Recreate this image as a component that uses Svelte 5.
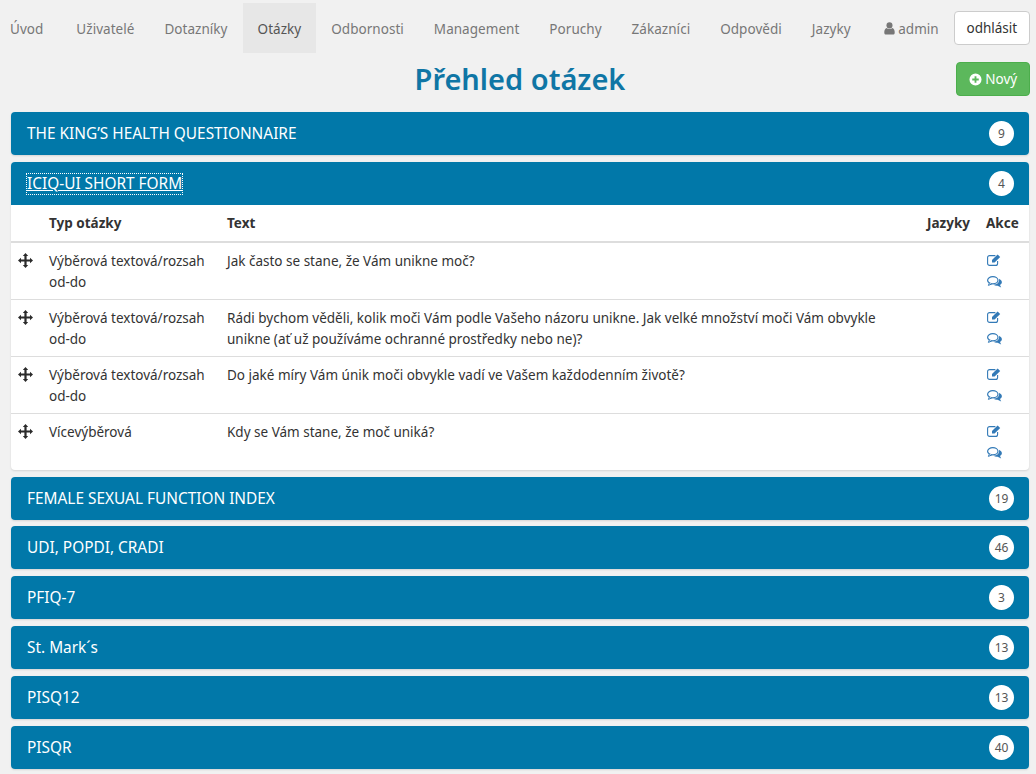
<script lang="ts">
  const navItems = ['Úvod', 'Uživatelé', 'Dotazníky', 'Otázky', 'Odbornosti', 'Management', 'Poruchy', 'Zákazníci', 'Odpovědi', 'Jazyky'];

  const groups = [
    { title: 'THE KING’S HEALTH QUESTIONNAIRE', count: 9 },
    { title: 'ICIQ-UI SHORT FORM', count: 4, open: true },
    { title: 'FEMALE SEXUAL FUNCTION INDEX', count: 19 },
    { title: 'UDI, POPDI, CRADI', count: 46 },
    { title: 'PFIQ-7', count: 3 },
    { title: 'St. Mark´s', count: 13 },
    { title: 'PISQ12', count: 13 },
    { title: 'PISQR', count: 40 }
  ];

  const questions = [
    { type: 'Výběrová textová/rozsah od-do', text: 'Jak často se stane, že Vám unikne moč?' },
    { type: 'Výběrová textová/rozsah od-do', text: 'Rádi bychom věděli, kolik moči Vám podle Vašeho názoru unikne. Jak velké množství moči Vám obvykle unikne (ať už používáme ochranné prostředky nebo ne)?' },
    { type: 'Výběrová textová/rozsah od-do', text: 'Do jaké míry Vám únik moči obvykle vadí ve Vašem každodenním životě?' },
    { type: 'Vícevýběrová', text: 'Kdy se Vám stane, že moč uniká?' }
  ];
</script>

<div class="page">
  <nav class="nav">
    <ul class="nav-links">
      {#each navItems as item}
        <li class:active={item === 'Otázky'}>{item}</li>
      {/each}
      <li class="user">
        <svg viewBox="0 0 12 14" width="11" height="13" aria-hidden="true">
          <circle cx="6" cy="3.6" r="3.3" fill="currentColor" />
          <path d="M0.3 11.6C0.3 9 1 7 2.7 6.4 3.6 7.2 4.7 7.6 6 7.6S8.4 7.2 9.3 6.4C11 7 11.7 9 11.7 11.6 11.7 13 10.8 13.6 9.7 13.6H2.3C1.2 13.6 0.3 13 0.3 11.6Z" fill="currentColor" />
        </svg>
        admin
      </li>
    </ul>
    <button class="logout">odhlásit</button>
  </nav>

  <header class="title-row">
    <h1>Přehled otázek</h1>
    <button class="add">
      <svg viewBox="0 0 14 14" width="13" height="13" aria-hidden="true">
        <path fill-rule="evenodd" d="M7 0.5a6.5 6.5 0 1 0 0 13a6.5 6.5 0 1 0 0-13ZM6 3.5H8V6H10.5V8H8V10.5H6V8H3.5V6H6Z" fill="currentColor" />
      </svg>
      Nový
    </button>
  </header>

  <div class="groups">
    {#each groups as group}
      <section class="panel">
        <div class="panel-head">
          <span class="panel-title" class:focused={group.open}>{group.title}</span>
          <span class="badge">{group.count}</span>
        </div>
        {#if group.open}
          <table>
            <thead>
              <tr>
                <th class="col-move"></th>
                <th class="col-type">Typ otázky</th>
                <th>Text</th>
                <th class="col-lang">Jazyky</th>
                <th class="col-actions">Akce</th>
              </tr>
            </thead>
            <tbody>
              {#each questions as q}
                <tr>
                  <td class="col-move">
                    <svg class="move" viewBox="0 0 15 15" width="15" height="15" aria-hidden="true">
                      <path d="M7.5 0 10.2 3H8.6V6.4H12V4.8L15 7.5 12 10.2V8.6H8.6V12H10.2L7.5 15 4.8 12H6.4V8.6H3V10.2L0 7.5 3 4.8V6.4H6.4V3H4.8Z" fill="#2b2b2b" />
                    </svg>
                  </td>
                  <td class="col-type">{q.type}</td>
                  <td>{q.text}</td>
                  <td class="col-lang"></td>
                  <td class="col-actions">
                    <div class="actions">
                      <svg viewBox="0 0 14 12" width="14" height="12" aria-hidden="true">
                        <path d="M10.6 7V9.4A2 2 0 0 1 8.6 11.4H2.6A2 2 0 0 1 0.6 9.4V3.6A2 2 0 0 1 2.6 1.6H8.4" fill="none" stroke="#337ab7" stroke-width="1.1" />
                        <path d="M5 6 10.6 0.6 13.2 3 7.6 8.4H5Z" fill="#337ab7" />
                      </svg>
                      <svg viewBox="0 0 15 12" width="15" height="12" aria-hidden="true">
                        <ellipse cx="5.8" cy="4.2" rx="5.2" ry="3.6" fill="none" stroke="#337ab7" stroke-width="1.2" />
                        <path d="M2.4 7 1.4 9.4 5 7.9" fill="#fff" stroke="#337ab7" stroke-width="1" />
                        <path d="M12 2.8C13.8 3.8 15.2 5 14.8 6.8 14.6 7.8 13.8 8.6 13 9L14.2 11.6 10.6 9.8C9 10 7.6 9.6 6.4 8.6 9.6 8.8 12.8 6.6 12 2.8Z" fill="#337ab7" />
                      </svg>
                    </div>
                  </td>
                </tr>
              {/each}
            </tbody>
          </table>
        {/if}
      </section>
    {/each}
  </div>
</div>

<style>
  :global(body) {
    background: #f1f1f1;
    font-family: "Noto Sans", "Open Sans", sans-serif;
    font-size: 13.5px;
    color: #333;
  }

  .page {
    padding: 3px 6px 0 10px;
    height: 771px;
    overflow: hidden;
  }

  /* top navigation */
  .nav {
    display: flex;
    align-items: center;
    justify-content: space-between;
    height: 50px;
    margin-left: -10px;
  }

  .nav-links {
    display: flex;
    list-style: none;
    margin: 0;
    padding: 0;
    letter-spacing: 0.04px;
  }

  .nav-links li {
    padding: 0 15px;
    line-height: 52px;
    height: 50px;
    color: #777;
    white-space: nowrap;
  }

  .nav-links li:first-child {
    padding: 0 18px 0 10px;
  }

  .nav-links li.active {
    background: #e7e7e7;
    color: #555;
  }

  .nav-links li.user {
    padding-left: 18px;
  }

  .user svg {
    vertical-align: -1px;
  }

  .logout {
    width: 78px;
    height: 34px;
    background: #fff;
    border: 1px solid #ccc;
    border-radius: 4px;
    font: inherit;
    color: #333;
    padding: 0;
  }

  /* page heading */
  .title-row {
    position: relative;
    height: 59px;
    text-align: center;
  }

  h1 {
    margin: 0;
    padding-top: 7px;
    font-size: 29px;
    line-height: 38px;
    font-weight: 600;
    color: #0f76a5;
  }

  .add {
    position: absolute;
    right: 0;
    top: 9px;
    width: 74px;
    height: 34px;
    background: #5cb85c;
    border: 1px solid #4cae4c;
    border-radius: 4px;
    color: #fff;
    font: inherit;
    padding: 0;
  }

  .add svg {
    vertical-align: -2px;
  }

  /* accordion */
  .groups {
    display: flex;
    flex-direction: column;
    gap: 6.8px;
    margin: 0 1px;
  }

  .panel {
    background: #fff;
    border-radius: 4px;
    box-shadow: 0 1px 2px rgba(0, 0, 0, 0.12);
    overflow: hidden;
  }

  .panel-head {
    display: flex;
    align-items: center;
    justify-content: space-between;
    height: 43px;
    padding: 0 15px 0 16px;
    background: #0178a9;
    color: #fff;
    font-size: 15.4px;
  }

  .panel-title {
    line-height: 20px;
    margin-top: 1px;
  }

  .panel-title.focused {
    outline: 1px dotted #fff;
    text-decoration: underline;
  }

  .badge {
    width: 25px;
    height: 25px;
    border-radius: 50%;
    background: #fff;
    color: #555;
    font-size: 12px;
    line-height: 25px;
    text-align: center;
  }

  /* question table */
  table {
    width: 100%;
    border-collapse: collapse;
    table-layout: fixed;
  }

  th {
    height: 36px;
    padding: 0 8px;
    text-align: left;
    font-weight: 700;
    color: #333;
    border-bottom: 2px solid #ddd;
  }

  td {
    padding: 8px 8px 6px;
    vertical-align: top;
    line-height: 21px;
    border-top: 1px solid #ddd;
    color: #333;
  }

  tbody tr:first-child td {
    border-top: 0;
  }

  .col-move {
    width: 14px;
  }

  .move {
    display: block;
    margin: 2px 0 0 -1px;
  }

  .col-type {
    width: 162px;
  }

  .col-lang {
    width: 50px;
    text-align: right;
  }

  .col-actions {
    width: 35px;
  }

  .actions {
    display: flex;
    flex-direction: column;
    gap: 10px;
    height: 42px;
    padding: 3px 0 0 1px;
    box-sizing: border-box;
  }
</style>
